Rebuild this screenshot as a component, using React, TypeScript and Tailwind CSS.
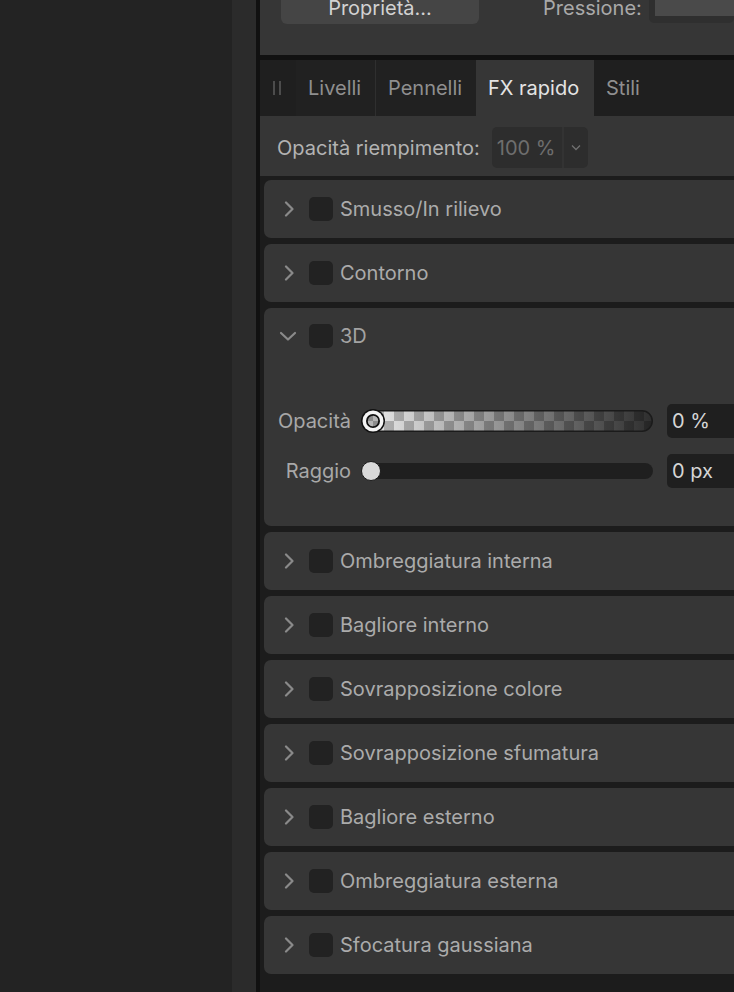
import React from "react";

const ChevronRight = () => (
  <svg width="12" height="16" viewBox="0 0 12 16" className="shrink-0">
    <polyline points="3,1.5 9.5,8 3,14.5" fill="none" stroke="#8a8a8a" strokeWidth="2.2" strokeLinecap="round" strokeLinejoin="round" />
  </svg>
);

const ChevronDown = () => (
  <svg width="18" height="12" viewBox="0 0 18 12" className="shrink-0">
    <polyline points="2,3 9,9.5 16,3" fill="none" stroke="#8a8a8a" strokeWidth="2.2" strokeLinecap="round" strokeLinejoin="round" />
  </svg>
);

const Checkbox = () => <div className="w-[24px] h-[24px] rounded-[5px] bg-[#222222] shrink-0" />;

const Row = ({ label }: { label: string }) => (
  <div className="h-[58px] shrink-0 rounded-l-[7px] bg-[#363636] flex items-center">
    <div className="w-[45px] flex justify-center pl-[5px]">
      <ChevronRight />
    </div>
    <Checkbox />
    <span className="ml-[7px] text-[20px] text-[#ababab]">{label}</span>
  </div>
);

const CheckerTrack = () => (
  <svg width="291" height="22" viewBox="0 0 291 22" className="block">
    <defs>
      <linearGradient id="g" x1="0" x2="1" y1="0" y2="0">
        <stop offset="0" stopColor="#eeeeee" />
        <stop offset="1" stopColor="#2e2e2e" />
      </linearGradient>
      <pattern id="chk" width="20" height="22" patternUnits="userSpaceOnUse" x="2" y="0">
        <rect x="10" y="0" width="10" height="11" fill="#000" fillOpacity="0.22" />
        <rect x="0" y="11" width="10" height="11" fill="#000" fillOpacity="0.22" />
      </pattern>
      <clipPath id="pill">
        <rect x="0.75" y="0.75" width="289.5" height="20.5" rx="10.25" />
      </clipPath>
    </defs>
    <g clipPath="url(#pill)">
      <rect width="291" height="22" fill="url(#g)" />
      <rect width="291" height="22" fill="url(#chk)" />
    </g>
    <rect x="0.75" y="0.75" width="289.5" height="20.5" rx="10.25" fill="none" stroke="#1b1b1b" strokeWidth="1.5" />
  </svg>
);

const OpacityThumb = () => (
  <svg width="26" height="26" viewBox="0 0 26 26" className="absolute left-[-2px] top-[-2px]">
    <circle cx="13" cy="13" r="12" fill="#111" />
    <circle cx="13" cy="13" r="10.5" fill="#f4f4f4" />
    <circle cx="13" cy="13" r="7" fill="#111" />
    <circle cx="13" cy="13" r="5.2" fill="#8c8c8c" />
    <path d="M13 7.8 A5.2 5.2 0 0 1 18.2 13 L13 13 Z" fill="#b5b5b5" />
    <path d="M13 18.2 A5.2 5.2 0 0 1 7.8 13 L13 13 Z" fill="#b5b5b5" />
  </svg>
);

export default function App() {
  const rows1 = ["Smusso/In rilievo", "Contorno"];
  const rows2 = [
    "Ombreggiatura interna",
    "Bagliore interno",
    "Sovrapposizione colore",
    "Sovrapposizione sfumatura",
    "Bagliore esterno",
    "Ombreggiatura esterna",
    "Sfocatura gaussiana",
  ];
  return (
    <div className="w-[734px] h-[992px] flex overflow-hidden bg-[#232323] font-['Inter',sans-serif]">
      <div className="w-[232px] shrink-0 bg-[#232323]" />
      <div className="w-[24px] shrink-0 bg-[#2b2b2b]" />
      <div className="w-[4px] shrink-0 bg-[#111111]" />
      <div className="flex-1 min-w-0 flex flex-col bg-[#1c1c1c]">
        {/* top */}
        <div className="h-[55px] shrink-0 bg-[#363636] flex items-start">
          <div className="mt-[-9px] ml-[21px] w-[198px] h-[33px] rounded-[6px] bg-[#454545] flex items-center justify-center text-[20px] text-[#d2d2d2] shrink-0">
            Proprietà...
          </div>
          <div className="mt-[-9px] h-[33px] ml-[64px] flex items-center text-[20px] text-[#a9a9a9] whitespace-nowrap shrink-0">
            Pressione:
          </div>
          <div className="mt-[-10px] ml-[7px] h-[33px] flex-1 rounded-[5px] bg-[#2f2f2f] pl-[6px] pb-[7px]">
            <div className="h-full bg-[#4a4a4a]" />
          </div>
        </div>
        <div className="h-[5px] shrink-0 bg-[#111111]" />
        {/* tabs */}
        <div className="h-[56px] shrink-0 bg-[#1f1f1f] flex items-stretch text-[20px] whitespace-nowrap">
          <div className="w-[36px] flex items-center pl-[13px] gap-[4px]">
            <div className="w-[2px] h-[14px] bg-[#4c4c4c]" />
            <div className="w-[2px] h-[14px] bg-[#4c4c4c]" />
          </div>
          <div className="w-[79px] flex items-center pl-[12px] pb-[1px] text-[#8f8f8f] bg-[#212121]">Livelli</div>
          <div className="w-[1px] bg-[#2f2f2f]" />
          <div className="w-[100px] flex items-center pl-[12px] pb-[1px] text-[#8f8f8f] bg-[#212121]">Pennelli</div>
          <div className="w-[118px] flex items-center pl-[12px] pb-[1px] text-[#e4e4e4] bg-[#363636]">FX rapido</div>
          <div className="flex items-center pl-[12px] pb-[1px] text-[#8f8f8f]">Stili</div>
        </div>
        {/* fill opacity */}
        <div className="h-[60px] shrink-0 bg-[#363636] flex items-center pl-[17px] pt-[3px]">
          <span className="text-[20px] text-[#b3b3b3] whitespace-nowrap">Opacità riempimento:</span>
          <div className="ml-[12px] h-[41px] w-[96px] rounded-[5px] bg-[#2d2d2d] flex">
            <div className="w-[70px] flex items-center pl-[5px] text-[20px] text-[#6e6e6e]">100 %</div>
            <div className="w-[2px] bg-[#333333]" />
            <div className="flex-1 flex items-center justify-center">
              <svg width="10" height="7" viewBox="0 0 10 7">
                <polyline points="1,1.5 5,5.5 9,1.5" fill="none" stroke="#707070" strokeWidth="1.3" />
              </svg>
            </div>
          </div>
        </div>
        {/* list */}
        <div className="flex-1 flex flex-col gap-[6px] pt-[4px] pl-[4px]">
          {rows1.map((r) => (
            <Row key={r} label={r} />
          ))}
          <div className="h-[218px] shrink-0 rounded-l-[7px] bg-[#363636] flex flex-col">
            <div className="h-[56px] flex items-center">
              <div className="w-[45px] flex justify-center pl-[3px]">
                <ChevronDown />
              </div>
              <Checkbox />
              <span className="ml-[7px] text-[20px] text-[#a3a3a3]">3D</span>
            </div>
            <div className="mt-[46px] h-[22px] flex items-center">
              <div className="w-[87px] text-right text-[20px] text-[#a8a8a8]">Opacità</div>
              <div className="ml-[11px] relative w-[291px] h-[22px]">
                <CheckerTrack />
                <OpacityThumb />
              </div>
              <div className="ml-[14px] h-[34px] flex-1 rounded-l-[5px] bg-[#1f1f1f] flex items-center pl-[5px] text-[20px] text-[#d6d6d6]">
                0 %
              </div>
            </div>
            <div className="mt-[28px] h-[22px] flex items-center">
              <div className="w-[87px] text-right text-[20px] text-[#a8a8a8]">Raggio</div>
              <div className="ml-[11px] relative w-[291px] h-[16px] rounded-full bg-[#1f1f1f]">
                <div className="absolute left-[-1px] top-[-2px] w-[20px] h-[20px] rounded-full bg-[#d9d9d9] border border-[#1a1a1a]" />
              </div>
              <div className="ml-[14px] h-[34px] flex-1 rounded-l-[5px] bg-[#1f1f1f] flex items-center pl-[5px] text-[20px] text-[#d6d6d6]">
                0 px
              </div>
            </div>
          </div>
          {rows2.map((r) => (
            <Row key={r} label={r} />
          ))}
        </div>
      </div>
    </div>
  );
}
